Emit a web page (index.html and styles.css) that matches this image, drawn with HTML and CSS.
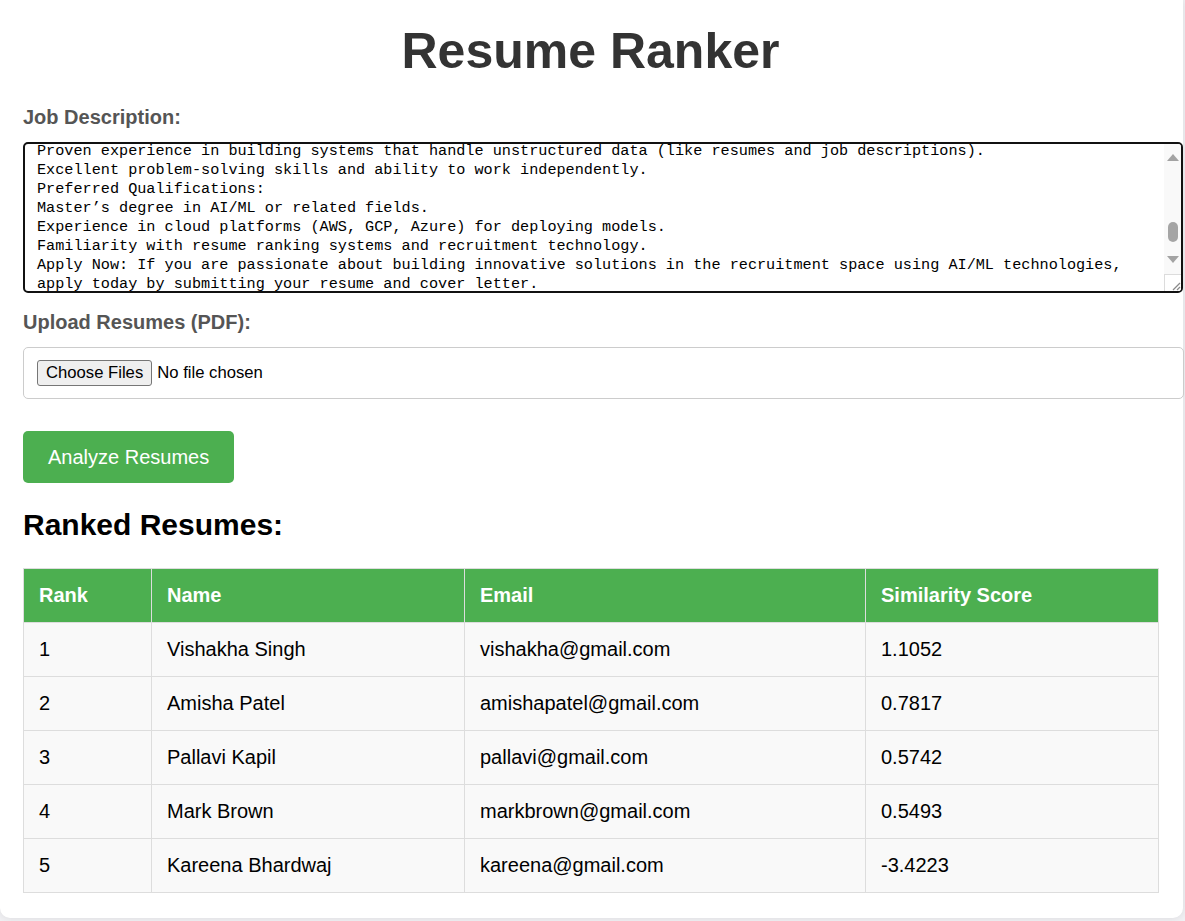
FILE: index.html
```html
<!DOCTYPE html>
<html lang="en">
<head>
<meta charset="utf-8">
<title>Resume Ranker</title>
<link rel="stylesheet" href="styles.css">
</head>
<body>
<div class="container">
  <h1 class="title">Resume Ranker</h1>

  <label class="field-label">Job Description:</label>
  <div class="fake-textarea">
    <div class="ta-text"><div class="ta-inner">Proven experience in building systems that handle unstructured data (like resumes and job descriptions).
Excellent problem-solving skills and ability to work independently.
Preferred Qualifications:
Master’s degree in AI/ML or related fields.
Experience in cloud platforms (AWS, GCP, Azure) for deploying models.
Familiarity with resume ranking systems and recruitment technology.
Apply Now: If you are passionate about building innovative solutions in the recruitment space using AI/ML technologies,
apply today by submitting your resume and cover letter.</div></div>
    <div class="scrollbar">
      <div class="sb-btn sb-up"><span class="tri-up"></span></div>
      <div class="sb-track"><span class="sb-thumb"></span></div>
      <div class="sb-btn sb-down"><span class="tri-down"></span></div>
      <div class="sb-gap"></div>
      <div class="resizer">
        <svg width="16" height="17" viewBox="0 0 16 17"><line x1="15" y1="9" x2="8" y2="16" stroke="#8a8a8a" stroke-width="1.2"/><line x1="15" y1="13" x2="12" y2="16" stroke="#8a8a8a" stroke-width="1.2"/></svg>
      </div>
    </div>
  </div>

  <label class="field-label">Upload Resumes (PDF):</label>
  <div class="file-box">
    <button class="file-btn" type="button">Choose Files</button>
    <span class="file-status">No file chosen</span>
  </div>

  <button class="analyze-btn" type="button">Analyze Resumes</button>

  <h2 class="section-title">Ranked Resumes:</h2>

  <table class="results">
    <colgroup>
      <col class="col-rank">
      <col class="col-name">
      <col class="col-email">
      <col class="col-score">
    </colgroup>
    <thead>
      <tr><th>Rank</th><th>Name</th><th>Email</th><th>Similarity Score</th></tr>
    </thead>
    <tbody>
      <tr><td>1</td><td>Vishakha Singh</td><td>vishakha@gmail.com</td><td>1.1052</td></tr>
      <tr><td>2</td><td>Amisha Patel</td><td>amishapatel@gmail.com</td><td>0.7817</td></tr>
      <tr><td>3</td><td>Pallavi Kapil</td><td>pallavi@gmail.com</td><td>0.5742</td></tr>
      <tr><td>4</td><td>Mark Brown</td><td>markbrown@gmail.com</td><td>0.5493</td></tr>
      <tr><td>5</td><td>Kareena Bhardwaj</td><td>kareena@gmail.com</td><td>-3.4223</td></tr>
    </tbody>
  </table>
</div>
</body>
</html>
```

FILE: styles.css
```css
* { box-sizing: border-box; }

html, body {
  margin: 0;
  padding: 0;
}

body {
  background: #f1f1f4;
  font-family: "Liberation Sans", Arial, sans-serif;
  font-size: 20px;
  color: #000;
}

.container {
  background: #fff;
  margin: 0 2px 20px 0;
  padding: 22px 25px 25px 23px;
  border-radius: 0 0 10px 10px;
  box-shadow: 0 0 10px rgba(0, 0, 0, 0.1);
}

.title {
  margin: 0 0 26px;
  font-size: 50px;
  line-height: 58px;
  font-weight: bold;
  color: #333;
  text-align: center;
}

.field-label {
  display: block;
  font-weight: bold;
  font-size: 20px;
  line-height: 23px;
  color: #555;
  margin-bottom: 13px;
}

.fake-textarea {
  display: flex;
  width: 1160px;
  height: 151px;
  border: 2px solid #111;
  border-radius: 5px;
  margin-bottom: 18px;
  overflow: hidden;
  background: #fff;
}

.ta-text {
  flex: 1;
  overflow: hidden;
  padding: 0 0 0 12px;
}

.ta-inner {
  margin-top: -2px;
  white-space: pre-wrap;
  font-family: "Liberation Mono", "DejaVu Sans Mono", monospace;
  font-size: 15.2px;
  line-height: 19px;
  color: #000;
}

.scrollbar {
  width: 17px;
  flex: none;
  display: flex;
  flex-direction: column;
  background: #f9f9f9;
}

.sb-btn {
  display: flex;
  align-items: center;
  justify-content: center;
}

.sb-up { height: 26px; }
.sb-down { height: 18px; }

.tri-up {
  width: 0;
  height: 0;
  border-left: 6px solid transparent;
  border-right: 6px solid transparent;
  border-bottom: 7px solid #a3a3a3;
}

.tri-down {
  width: 0;
  height: 0;
  border-left: 6px solid transparent;
  border-right: 6px solid transparent;
  border-top: 7px solid #a3a3a3;
}

.sb-track {
  flex: 1;
  display: flex;
  justify-content: center;
}

.sb-thumb {
  display: block;
  width: 10px;
  height: 20px;
  margin-top: 52px;
  border-radius: 5px;
  background: #a5a5a5;
}

.sb-gap { height: 6px; }

.resizer {
  height: 17px;
  background: #fff;
  border-left: 1px solid #dcdcdc;
  border-top: 1px solid #dcdcdc;
  display: flex;
  align-items: flex-end;
  justify-content: flex-end;
}

.resizer svg { display: block; }

.file-box {
  display: flex;
  align-items: center;
  width: 1161px;
  height: 52px;
  padding: 0 12px 0 13px;
  border: 1px solid #ccc;
  border-radius: 5px;
}

.file-btn {
  height: 26px;
  padding: 0 8px;
  font-family: "Liberation Sans", Arial, sans-serif;
  font-size: 16.67px;
  color: #000;
  background: #efefef;
  border: 1px solid #767676;
  border-radius: 3px;
}

.file-status {
  margin-left: 5px;
  font-size: 16.67px;
  color: #000;
}

.analyze-btn {
  display: block;
  margin-top: 32px;
  padding: 15px 25px;
  font-family: "Liberation Sans", Arial, sans-serif;
  font-size: 20px;
  line-height: 22px;
  color: #fff;
  background: #4caf50;
  border: none;
  border-radius: 5px;
}

.section-title {
  margin: 25px 0 25px;
  font-size: 30px;
  line-height: 34.5px;
  font-weight: bold;
  color: #000;
}

.results {
  width: 1135px;
  table-layout: fixed;
  border-collapse: collapse;
}

.col-rank { width: 128px; }
.col-name { width: 313px; }
.col-email { width: 401px; }
.col-score { width: 293px; }

.results th,
.results td {
  border: 1px solid #ddd;
  padding: 15px;
  text-align: left;
  font-size: 20px;
  line-height: 23px;
}

.results th {
  background: #4caf50;
  color: #fff;
  font-weight: bold;
}

.results td {
  background: #f9f9f9;
  color: #000;
}
```
